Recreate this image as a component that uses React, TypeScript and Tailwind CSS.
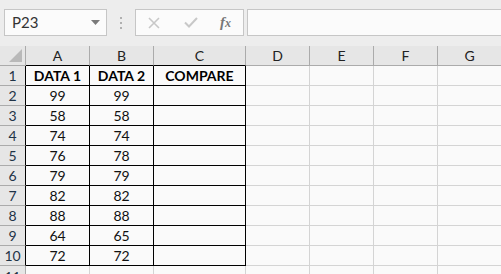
import React from 'react';

const cols = [
  { id: 'A', w: 'w-[64px]' },
  { id: 'B', w: 'w-[64px]' },
  { id: 'C', w: 'w-[92px]' },
  { id: 'D', w: 'w-[64px]' },
  { id: 'E', w: 'w-[64px]' },
  { id: 'F', w: 'w-[64px]' },
  { id: 'G', w: 'w-[64px]' },
];

const rows: [string, string, string][] = [
  ['DATA 1', 'DATA 2', 'COMPARE'],
  ['99', '99', ''],
  ['58', '58', ''],
  ['74', '74', ''],
  ['76', '78', ''],
  ['79', '79', ''],
  ['82', '82', ''],
  ['88', '88', ''],
  ['64', '65', ''],
  ['72', '72', ''],
];

function Toolbar() {
  return (
    <div className="flex h-[46px] items-start bg-[#ededed] pt-[9px]">
      {/* Name box */}
      <div className="ml-[4px] flex h-[27px] w-[103px] items-center justify-between border border-[#c6c6c6] bg-[#fbfbfb] pl-[7px] pr-[6px]">
        <span className="text-[15px] text-[#333]">P23</span>
        <svg width="9" height="5" viewBox="0 0 9 5">
          <path d="M0 0h9L4.5 5z" fill="#7a7a7a" />
        </svg>
      </div>
      {/* Grip */}
      <div className="ml-[13px] mt-[8px] flex flex-col gap-[3px]">
        <div className="h-[2px] w-[2px] bg-[#b0b0b0]" />
        <div className="h-[2px] w-[2px] bg-[#b0b0b0]" />
        <div className="h-[2px] w-[2px] bg-[#b0b0b0]" />
      </div>
      {/* Buttons */}
      <div className="ml-[13px] flex h-[27px] w-[109px] items-center border border-[#c6c6c6] bg-[#fbfbfb]">
        <svg className="ml-[12px]" width="12" height="12" viewBox="0 0 12 12">
          <path d="M1 1l10 10M11 1L1 11" stroke="#c8c8c8" strokeWidth="1.6" />
        </svg>
        <svg className="ml-[24px]" width="14" height="11" viewBox="0 0 14 11">
          <path d="M1 5.5l4 4L13 1" stroke="#c8c8c8" strokeWidth="2" fill="none" />
        </svg>
        <span className="ml-[22px] font-['Liberation_Serif',serif] text-[15px] italic font-bold text-[#777]">
          f<span className="text-[12px]">x</span>
        </span>
      </div>
      {/* Formula bar */}
      <div className="ml-[3px] h-[27px] flex-1 border border-r-0 border-[#c6c6c6] bg-[#fbfbfb]" />
    </div>
  );
}

export default function App() {
  return (
    <div className="h-[274px] w-[501px] overflow-hidden bg-[#fafafa] font-['Lato','Noto_Sans',sans-serif] text-[14px] text-[#111]">
      <Toolbar />

      {/* Column headers */}
      <div className="flex h-[20px]">
        <div className="relative h-[20px] w-[26px] shrink-0 border-r border-b border-[#ababab] bg-[#e6e6e6]">
          <svg className="absolute bottom-[3px] right-[3px]" width="13" height="13" viewBox="0 0 13 13">
            <path d="M13 0V13H0z" fill="#b9b9b9" />
          </svg>
        </div>
        {cols.map((c, i) => (
          <div
            key={c.id}
            className={`${c.w} flex h-[20px] shrink-0 items-center justify-center border-r border-b bg-[#e6e6e6] text-[#222] ${
              i < 3 ? 'border-r-[#ababab] border-b-black' : 'border-[#ababab]'
            }`}
          >
            {c.id}
          </div>
        ))}
      </div>

      {/* Rows */}
      {rows.map((r, ri) => (
        <div key={ri} className="flex h-[20px]">
          <div className="flex h-[20px] w-[26px] shrink-0 items-center justify-center border-r border-b border-r-black border-b-[#ababab] bg-[#e6e6e6] text-[#1f3347]">
            {ri + 1}
          </div>
          {cols.map((c, ci) => {
            const inTable = ci < 3;
            const val = inTable ? r[ci] : '';
            return (
              <div
                key={c.id}
                className={`${c.w} flex h-[20px] shrink-0 items-center justify-center border-r border-b ${
                  inTable ? 'border-black' : 'border-[#d4d4d4]'
                } ${ri === 0 ? 'font-bold text-black' : ''}`}
              >
                {val}
              </div>
            );
          })}
        </div>
      ))}

      {/* Row 11 partially visible */}
      <div className="flex h-[20px]">
        <div className="flex h-[20px] w-[26px] shrink-0 items-center justify-center border-r border-[#ababab] bg-[#e6e6e6] text-[#1f3347]">
          11
        </div>
        {cols.map((c) => (
          <div key={c.id} className={`${c.w} h-[20px] shrink-0 border-r border-[#d4d4d4]`} />
        ))}
      </div>
    </div>
  );
}
